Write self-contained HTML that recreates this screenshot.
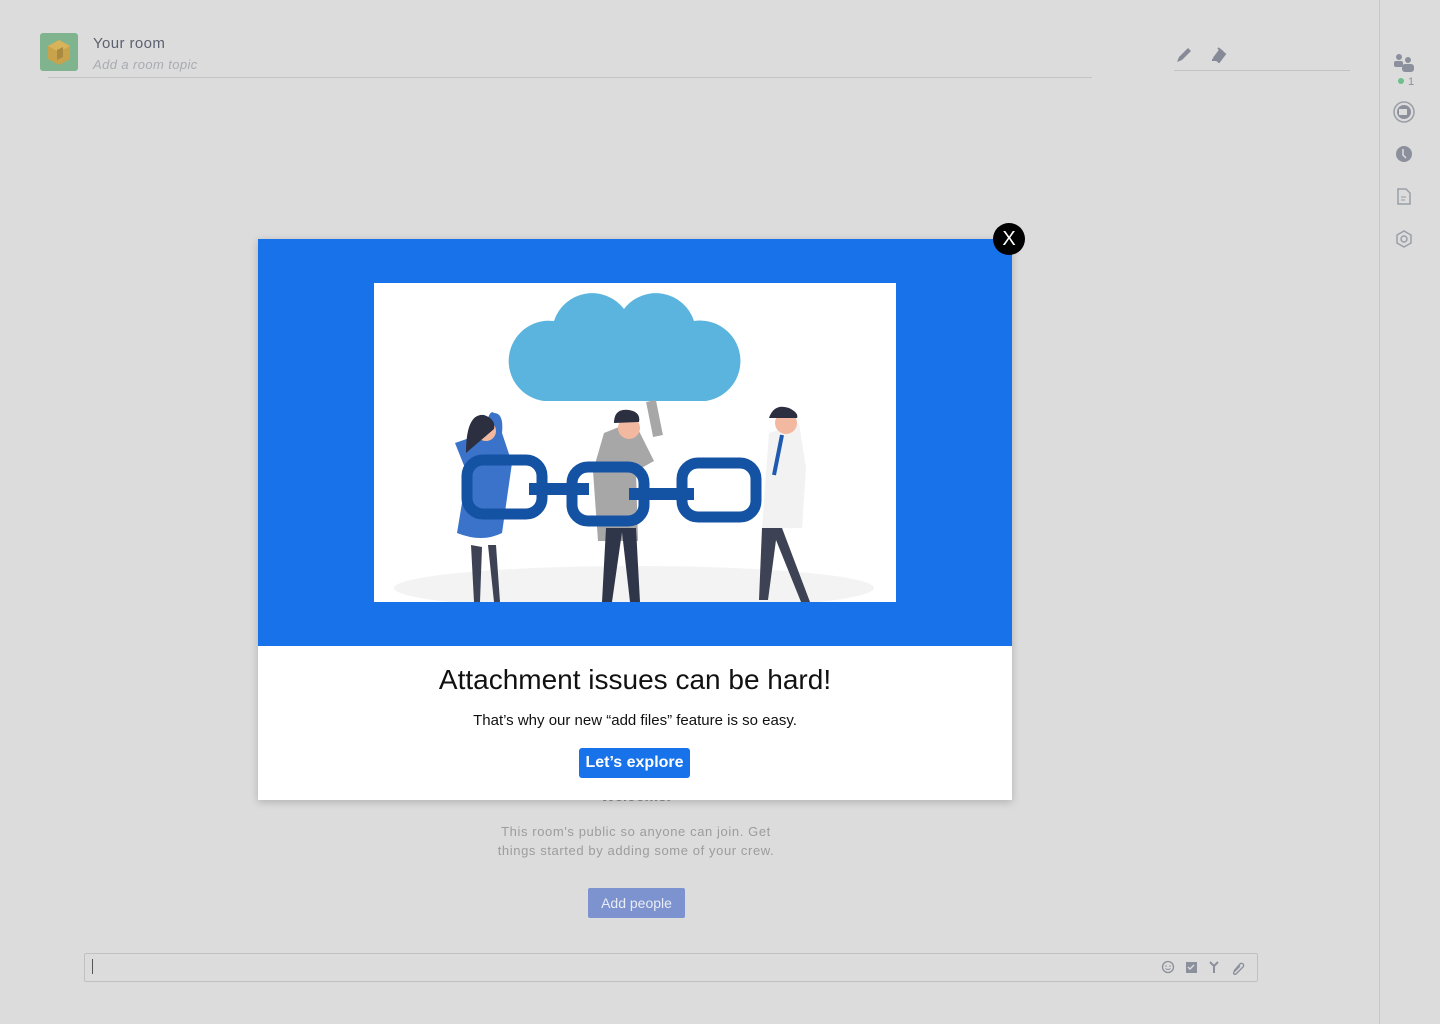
<!DOCTYPE html>
<html><head><meta charset="utf-8"><style>
body{margin:0;width:1440px;height:1024px;background:#dcdcdc;font-family:"Liberation Sans",sans-serif;position:relative;overflow:hidden}
.a{position:absolute}
</style></head><body>
<div class="a" style="left:40px;top:33px;width:38px;height:38px;background:#7fb48e;border-radius:3px"></div>
<svg class="a" style="left:44px;top:37px" width="30" height="30"><polygon points="15,3 26,9 26,22 15,28 4,22 4,9" fill="#c9a24c"/><polygon points="15,3 26,9 15,15 4,9" fill="#d9b35a"/><polygon points="13,13 19,10 19,20 13,23" fill="#a98a40"/></svg>
<div class="a" style="left:93px;top:35px;font-size:15px;color:#5c6170;letter-spacing:.4px">Your room</div>
<div class="a" style="left:93px;top:57px;font-size:13px;color:#a9abb2;font-style:italic;letter-spacing:.4px">Add a room topic</div>
<div class="a" style="left:48px;top:77px;width:1044px;height:1px;background:#c4c4c4"></div>
<div class="a" style="left:1174px;top:70px;width:176px;height:1px;background:#c4c4c4"></div>
<svg class="a" style="left:1174px;top:44px" width="60" height="22"><path d="M3 18l2-5 9-9 3 3-9 9z" fill="#868a96"/><path d="M40 14l6-8 5 4-6 8z M38 16l4 0 M44 4l5 4" fill="#868a96" stroke="#868a96" stroke-width="2"/></svg>
<div class="a" style="left:1379px;top:0;width:1px;height:1024px;background:#c8c8c8"></div>
<svg class="a" style="left:1388px;top:50px" width="34" height="210"><circle cx="11" cy="7" r="3" fill="#8c909c"/><rect x="6" y="11" width="9" height="6" rx="2" fill="#8c909c"/><circle cx="20" cy="10" r="3" fill="#8c909c"/><rect x="14" y="14" width="12" height="8" rx="3" fill="#8c909c"/><circle cx="13" cy="31" r="3" fill="#6cc08a"/><text x="20" y="35" font-size="11" fill="#8c909c" font-family="Liberation Sans">1</text>
<circle cx="16" cy="62" r="10" fill="none" stroke="#9a9ea8" stroke-width="1.5"/><circle cx="16" cy="62" r="7" fill="#8c909c"/><rect x="11" y="59" width="8" height="6" fill="#ddd"/>
<circle cx="16" cy="104" r="8" fill="#8c909c"/><path d="M15 99v6l3 3" stroke="#ddd" stroke-width="1.5" fill="none"/>
<path d="M10 139h8l4 4v11h-12z" fill="none" stroke="#9a9ea8" stroke-width="1.5"/><path d="M13 147h5M13 150h4" stroke="#9a9ea8"/>
<polygon points="16,181 23,185 23,193 16,197 9,193 9,185" fill="none" stroke="#9a9ea8" stroke-width="1.5"/><circle cx="16" cy="189" r="3" fill="none" stroke="#9a9ea8" stroke-width="1.5"/></svg>
<div class="a" style="left:0;top:788px;width:1272px;text-align:center;font-size:15px;color:#8a8a8a;font-weight:bold">Welcome!</div>
<div class="a" style="left:0;top:822px;width:1272px;text-align:center;font-size:13px;line-height:19px;color:#9c9c9c;letter-spacing:.6px">This room's public so anyone can join. Get<br>things started by adding some of your crew.</div>
<div class="a" style="left:588px;top:888px;width:97px;height:30px;background:#7d93cf;border-radius:2px;color:#e8ecf6;font-size:14px;line-height:30px;text-align:center">Add people</div>
<div class="a" style="left:84px;top:953px;width:1172px;height:27px;border:1px solid #c0c0c0;border-radius:2px"></div>
<div class="a" style="left:92px;top:959px;width:1px;height:15px;background:#555"></div>
<svg class="a" style="left:1160px;top:959px" width="90" height="16"><circle cx="8" cy="8" r="5.5" fill="none" stroke="#8c909c" stroke-width="1.3"/><circle cx="6" cy="7" r=".8" fill="#8c909c"/><circle cx="10" cy="7" r=".8" fill="#8c909c"/><path d="M5.5 9.5q2.5 2 5 0" stroke="#8c909c" fill="none"/><rect x="26" y="3" width="11" height="11" fill="#8c909c"/><path d="M28 8l2 2 4-4" stroke="#ddd" fill="none" stroke-width="1.4"/><path d="M50 3l4 4v7M58 3l-4 4" stroke="#8c909c" stroke-width="2" fill="none"/><path d="M74 12l6-7a2 2 0 0 1 3 3l-7 7a1 1 0 0 1-2-2l6-6" stroke="#8c909c" stroke-width="1.4" fill="none"/></svg>
<div class="a" style="left:258px;top:239px;width:754px;height:561px;background:#fff;box-shadow:0 2px 8px rgba(0,0,0,.2)">
<div class="a" style="left:0;top:0;width:754px;height:407px;background:#1872e9"></div>
<svg class="a" style="left:116px;top:44px" width="522" height="319" viewBox="0 0 522 319"><rect width="522" height="319" fill="#fff"/>
<ellipse cx="260" cy="305" rx="240" ry="22" fill="#f3f3f3"/>
<path d="M170 118a35 35 0 0 1 10-80a40 40 0 0 1 70-12a40 40 0 0 1 70 12a40 40 0 0 1 12 80z" fill="#5ab4de"/>
<path d="M110 150q5-25 10-20q10 0 8 20l10 30l-10 70q-20 10-45 0l10-60l-12-30z" fill="#3a73c9"/>
<circle cx="112" cy="148" r="10" fill="#f2b8a0"/><path d="M92 170q0-40 18-38q12 4 10 14" fill="#2b2f40"/>
<path d="M97 262l3 57h6l2-55M114 262l6 57h6l-4-57" fill="#3d4354"/>
<path d="M230 150l30-12l20 40l-18 10l2 70h-40l-5-70z" fill="#a7a7a7"/><path d="M277 118l7 35" stroke="#a7a7a7" stroke-width="10"/>
<circle cx="255" cy="145" r="11" fill="#f2b8a0"/><path d="M240 140q0-15 15-13q12 2 10 12z" fill="#2b2f40"/>
<path d="M232 245l-4 74h10l10-70l8 70h10l-4-74z" fill="#2f3649"/>
<path d="M395 150l30-10l7 45l-4 60h-40z" fill="#f2f2f2"/><path d="M408 152l-8 40" stroke="#1e5bb0" stroke-width="4"/>
<circle cx="412" cy="140" r="11" fill="#f2b8a0"/><path d="M395 135q5-15 20-10q10 5 8 10z" fill="#2b2f40"/>
<path d="M388 245l-3 72h9l8-60l25 62h9l-28-74z" fill="#3d4354"/>
<rect x="93" y="177" width="75" height="54" rx="16" fill="none" stroke="#1452a3" stroke-width="11"/>
<rect x="198" y="184" width="72" height="54" rx="16" fill="none" stroke="#1452a3" stroke-width="11"/>
<rect x="308" y="180" width="74" height="54" rx="16" fill="none" stroke="#1452a3" stroke-width="11"/>
<path d="M155 206h60M255 211h65" stroke="#1452a3" stroke-width="12"/></svg>
<div class="a" style="left:0;top:425px;width:754px;text-align:center;font-size:28px;color:#111">Attachment issues can be hard!</div>
<div class="a" style="left:0;top:473px;width:754px;text-align:center;font-size:15px;color:#111">That’s why our new “add files” feature is so easy.</div>
<div class="a" style="left:321px;top:509px;width:111px;height:30px;background:#1872e9;border-radius:3px;color:#fff;font-weight:bold;font-size:16px;line-height:29px;text-align:center">Let’s explore</div>
</div>
<div class="a" style="left:993px;top:223px;width:32px;height:32px;border-radius:50%;background:#000;color:#fff;font-size:20px;line-height:32px;text-align:center">X</div>
</body></html>
